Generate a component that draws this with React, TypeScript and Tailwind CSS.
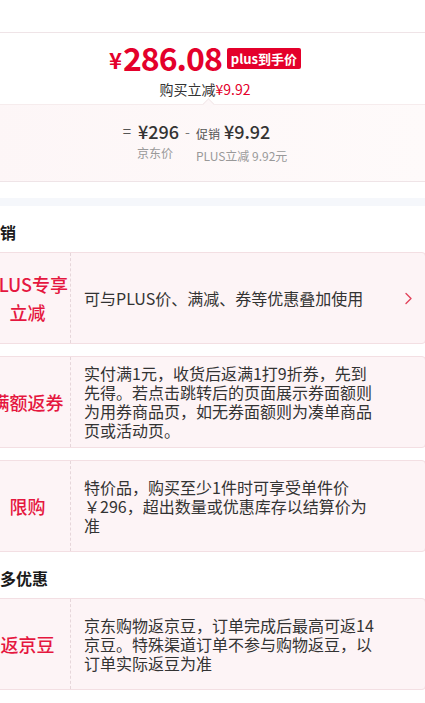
import React from "react";

function Chevron() {
  return (
    <svg width="9" height="13" viewBox="0 0 9 13" fill="none">
      <polyline points="2,1.5 7,6.5 2,11.5" stroke="#e2445c" strokeWidth="1.4" strokeLinecap="round" strokeLinejoin="round" />
    </svg>
  );
}

function Card({ label, text, arrow }: { label: React.ReactNode; text: string; arrow?: boolean }) {
  return (
    <div className="flex h-[92px] border border-[#f3dfe3] bg-[#fdf4f6] rounded-[4px]">
      <div className="w-[86px] shrink-0 flex items-center justify-center border-r border-dashed border-[#e6d6da] text-center text-[18px] leading-[28px] font-medium text-[#e5173f]">
        {label}
      </div>
      <div className="flex-1 flex items-center pl-[13px] pr-[12px]">
        <div className="w-[294px] text-[16px] leading-[19px] text-[#333333]">{text}</div>
        {arrow && (
          <div className="ml-auto flex items-center">
            <Chevron />
          </div>
        )}
      </div>
    </div>
  );
}

export default function App() {
  return (
    <div className="w-[425px] h-[703px] overflow-hidden bg-white font-['Noto_Sans_CJK_SC','Noto_Sans',sans-serif]">
      <div className="ml-[-16px] w-[442px]">
        <div className="h-[32px]" />
        {/* price card */}
        <div className="border-t border-b border-[#efe4e7]">
          <div className="pt-[3px] pb-[5px] flex flex-col items-center bg-white">
            <div className="flex items-center h-[42px]">
              <span className="text-[#e4002b] font-bold text-[22px] leading-[42px] mr-[1px] mt-[4px]">¥</span>
              <span className="text-[#e4002b] font-bold text-[32px] leading-[42px] tracking-[-1px]">286.08</span>
              <span className="ml-[5px] mt-[3px] h-[21px] px-[4px] rounded-[2px] bg-[#e4002b] text-white font-bold text-[13px] leading-[21px]">plus到手价</span>
            </div>
            <div className="mt-[1px] text-[14px] leading-[20px] text-[#333333]">
              购买立减<span className="text-[#e4002b]">¥9.92</span>
            </div>
          </div>
          <div className="relative border-t border-[#f6eced] bg-gradient-to-r from-[#fdf6f7] to-[#fefafa] pt-[12px] pb-[17px] flex justify-center">
            <div className="absolute top-[-5px] left-[220px] w-[9px] h-[9px] rotate-45 bg-[#fdf7f8] border-l border-t border-[#f3e8ea]" />
            <div className="flex items-start">
              <span className="text-[15px] leading-[28px] text-[#555555] mr-[7px]">=</span>
              <div className="flex flex-col">
                <span className="text-[18px] leading-[28px] text-[#333333] font-medium">¥296</span>
                <span className="text-[12px] leading-[16px] text-[#999999] -ml-[1px]">京东价</span>
              </div>
              <span className="text-[14px] leading-[28px] text-[#777777] mx-[6px]">-</span>
              <div className="flex flex-col">
                <div className="flex items-baseline leading-[28px]">
                  <span className="text-[12px] text-[#555555] mr-[4px]">促销</span>
                  <span className="text-[18px] text-[#333333] font-medium">¥9.92</span>
                </div>
                <span className="text-[12px] leading-[16px] text-[#999999]">PLUS立减 9.92元</span>
              </div>
            </div>
          </div>
        </div>
        <div className="h-[16px]" />
        <div className="h-[8px] bg-[#f5f7fb]" />

        {/* 促销 */}
        <div className="pt-[14px] pb-[8px] text-[16px] leading-[24px] font-bold text-[#1a1a1a]">促销</div>
        <div className="flex flex-col gap-[12px]">
          <Card
            label={<span>PLUS专享<br />立减</span>}
            text="可与PLUS价、满减、券等优惠叠加使用"
            arrow
          />
          <Card
            label="满额返券"
            text="实付满1元，收货后返满1打9折券，先到先得。若点击跳转后的页面展示券面额则为用券商品页，如无券面额则为凑单商品页或活动页。"
          />
          <Card label="限购" text="特价品，购买至少1件时可享受单件价￥296，超出数量或优惠库存以结算价为准" />
        </div>

        {/* 更多优惠 */}
        <div className="pt-[14px] pb-[8px] text-[16px] leading-[24px] font-bold text-[#1a1a1a]">更多优惠</div>
        <div className="flex flex-col gap-[12px]">
          <Card label="返京豆" text="京东购物返京豆，订单完成后最高可返14京豆。特殊渠道订单不参与购物返豆，以订单实际返豆为准" />
        </div>
      </div>
    </div>
  );
}
